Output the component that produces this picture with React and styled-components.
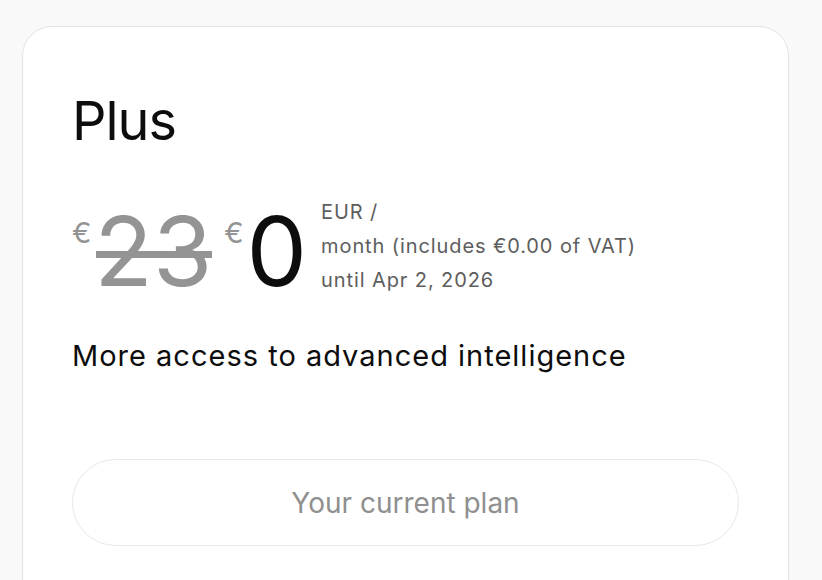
import React from 'react';
import styled, { createGlobalStyle } from 'styled-components';

const GlobalStyle = createGlobalStyle`
  html, body {
    margin: 0;
    padding: 0;
    background: #f9f9f9;
    font-family: Inter, "Liberation Sans", sans-serif;
    overflow: hidden;
  }
`;

const Page = styled.div`
  height: 580px;
  padding: 26px 33px 0 22px;
  box-sizing: border-box;
  overflow: hidden;
`;

const Card = styled.div`
  background: #fff;
  border: 1.5px solid #e3e3e3;
  border-radius: 30px;
  padding: 62px 49px 60px 49px;
  min-height: 700px;
  box-sizing: border-box;
`;

const Title = styled.h2`
  margin: 0;
  font-size: 54px;
  font-weight: 400;
  line-height: 64px;
  letter-spacing: -1px;
  color: #0d0d0d;
`;

const PriceRow = styled.div`
  display: flex;
  align-items: flex-start;
  margin-top: 48px;
  height: 100px;
`;

const Amount = styled.div`
  display: flex;
  align-items: flex-start;
  gap: 3px;
  margin-right: ${(p) => p.$gap || 0}px;
`;

const Currency = styled.span`
  font-size: 29px;
  line-height: 29px;
  color: #949494;
  margin-top: 17px;
`;

const Value = styled.span`
  position: relative;
  font-size: 96px;
  line-height: 100px;
  color: ${(p) => (p.$old ? '#949494' : '#0d0d0d')};

  ${(p) =>
    p.$old &&
    `
    &::after {
      content: '';
      position: absolute;
      left: 2px;
      right: 0;
      top: 50px;
      height: 7px;
      background: #949494;
    }
  `}
`;

const Details = styled.div`
  font-size: 20px;
  line-height: 34px;
  letter-spacing: 0.9px;
  color: #5d5d5d;
  margin-left: 14px;
  margin-top: -6px;
`;

const Tagline = styled.p`
  margin: 36px 0 0;
  font-size: 29px;
  line-height: 38px;
  letter-spacing: 1px;
  color: #0d0d0d;
`;

const PlanButton = styled.button`
  display: flex;
  align-items: center;
  justify-content: center;
  width: 100%;
  height: 87px;
  margin-top: 84px;
  background: #fff;
  border: 1.5px solid #e8e8e8;
  border-radius: 999px;
  font-family: inherit;
  font-size: 28px;
  color: #8f8f8f;
`;

export default function App() {
  return (
    <>
      <GlobalStyle />
      <Page>
        <Card>
          <Title>Plus</Title>
          <PriceRow>
            <Amount $gap={12}>
              <Currency>€</Currency>
              <Value $old>23</Value>
            </Amount>
            <Amount>
              <Currency>€</Currency>
              <Value>0</Value>
            </Amount>
            <Details>
              <div>EUR /</div>
              <div>month (includes €0.00 of VAT)</div>
              <div>until Apr 2, 2026</div>
            </Details>
          </PriceRow>
          <Tagline>More access to advanced intelligence</Tagline>
          <PlanButton disabled>Your current plan</PlanButton>
        </Card>
      </Page>
    </>
  );
}
